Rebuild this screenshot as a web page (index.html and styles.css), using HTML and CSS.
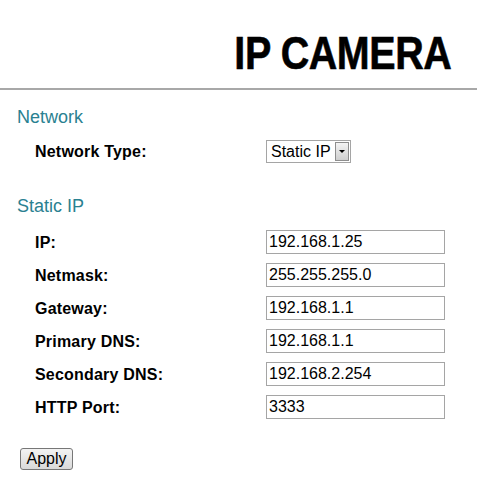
FILE: index.html
```html
<!DOCTYPE html>
<html>
<head>
<meta charset="utf-8">
<link rel="stylesheet" href="styles.css">
</head>
<body>
<header class="header">
  <h1 class="title">IP CAMERA</h1>
</header>
<main class="main">
  <h2 class="section">Network</h2>
  <div class="grid first">
    <label class="label">Network Type:</label>
    <span class="selectbox">
      <select class="select"><option>Static IP</option><option>DHCP</option></select>
      <span class="arrow"><span class="tri"></span></span>
    </span>
  </div>
  <h2 class="section second">Static IP</h2>
  <div class="grid rows">
    <label class="label">IP:</label><input class="field" type="text" value="192.168.1.25">
    <label class="label">Netmask:</label><input class="field" type="text" value="255.255.255.0">
    <label class="label">Gateway:</label><input class="field" type="text" value="192.168.1.1">
    <label class="label">Primary DNS:</label><input class="field" type="text" value="192.168.1.1">
    <label class="label">Secondary DNS:</label><input class="field" type="text" value="192.168.2.254">
    <label class="label">HTTP Port:</label><input class="field" type="text" value="3333">
  </div>
  <button class="apply" type="button">Apply</button>
</main>
</body>
</html>
```
FILE: styles.css
```css
html, body {
  margin: 0;
  padding: 0;
  background: #ffffff;
}
body {
  font-family: "Liberation Sans", Arial, sans-serif;
  color: #000;
  width: 477px;
}
.header {
  display: flex;
  justify-content: flex-end;
  padding: 26px 26px 9px 0;
  border-bottom: 2px solid #a8a8a8;
}
.title {
  margin: 0;
  font-size: 47px;
  line-height: 53px;
  font-weight: bold;
  letter-spacing: -0.5px;
  color: #000;
  transform: scaleX(0.84);
  transform-origin: right center;
  white-space: nowrap;
  -webkit-text-stroke: 0.6px #000;
}
.main {
  padding: 0 0 0 17px;
}
.section {
  margin: 17px 0 0;
  font-size: 18px;
  line-height: 21px;
  font-weight: normal;
  color: #2a8191;
}
.section.second {
  margin-top: 33px;
}
.grid {
  display: grid;
  grid-template-columns: 231px 179px;
  align-items: center;
  padding-left: 18px;
}
.grid.first {
  margin-top: 12px;
}
.grid.rows {
  margin-top: 13px;
  row-gap: 9px;
}
.label {
  font-size: 16px;
  font-weight: bold;
  line-height: 19px;
  letter-spacing: 0.2px;
}
.selectbox {
  display: inline-flex;
  align-items: center;
  width: 85px;
  height: 23px;
  box-sizing: border-box;
  border: 1px solid #a5a5a5;
  background: #fff;
}
.select {
  appearance: none;
  -webkit-appearance: none;
  border: 0;
  outline: none;
  background: transparent;
  font-family: "Liberation Sans", Arial, sans-serif;
  font-size: 16px;
  color: #000;
  padding: 0 0 0 4px;
  margin: 0;
  width: 68px;
  height: 21px;
}
.arrow {
  display: flex;
  align-items: center;
  justify-content: center;
  width: 14px;
  height: 19px;
  box-sizing: border-box;
  border: 1px solid #8e8e8e;
  background: linear-gradient(#f4f4f4, #cfcfcf);
}
.tri {
  width: 0;
  height: 0;
  border-left: 3px solid transparent;
  border-right: 3px solid transparent;
  border-top: 3px solid #000;
}
.field {
  width: 179px;
  height: 24px;
  box-sizing: border-box;
  border: 1px solid #a5a5a5;
  padding: 0 0 0 2px;
  margin: 0;
  font-family: "Liberation Sans", Arial, sans-serif;
  font-size: 16px;
  color: #000;
  background: #fff;
  outline: none;
}
.apply {
  display: block;
  margin: 29px 0 0 3px;
  width: 53px;
  height: 22px;
  padding: 0;
  border: 1px solid #777;
  border-radius: 3px;
  background: linear-gradient(#f3f3f3, #d9d9d9);
  font-family: "Liberation Sans", Arial, sans-serif;
  font-size: 16px;
  color: #000;
}
```
